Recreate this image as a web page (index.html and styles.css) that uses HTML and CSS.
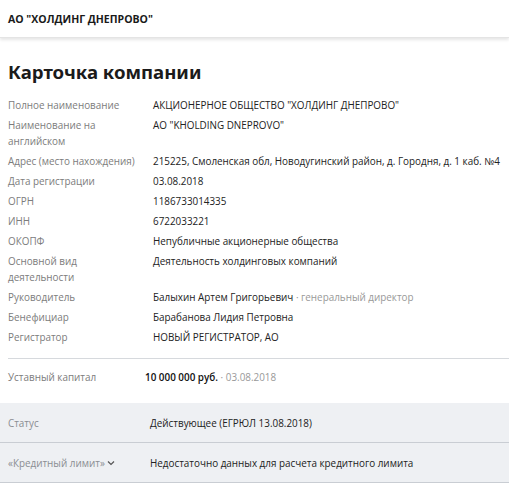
FILE: index.html
```html
<!DOCTYPE html>
<html lang="ru">
<head>
<meta charset="utf-8">
<link rel="stylesheet" href="styles.css">
</head>
<body>
<header class="topbar">АО "ХОЛДИНГ ДНЕПРОВО"</header>
<main class="card">
  <h1 class="title">Карточка компании</h1>
  <dl class="props">
    <div class="row"><dt>Полное наименование</dt><dd>АКЦИОНЕРНОЕ ОБЩЕСТВО "ХОЛДИНГ ДНЕПРОВО"</dd></div>
    <div class="row"><dt>Наименование на английском</dt><dd>АО "KHOLDING DNEPROVO"</dd></div>
    <div class="row"><dt>Адрес (место нахождения)</dt><dd>215225, Смоленская обл, Новодугинский район, д. Городня, д. 1 каб. №4</dd></div>
    <div class="row"><dt>Дата регистрации</dt><dd>03.08.2018</dd></div>
    <div class="row"><dt>ОГРН</dt><dd>1186733014335</dd></div>
    <div class="row"><dt>ИНН</dt><dd>6722033221</dd></div>
    <div class="row"><dt>ОКОПФ</dt><dd>Непубличные акционерные общества</dd></div>
    <div class="row"><dt>Основной вид деятельности</dt><dd>Деятельность холдинговых компаний</dd></div>
    <div class="row"><dt>Руководитель</dt><dd>Балыхин Артем Григорьевич <span class="muted">· генеральный директор</span></dd></div>
    <div class="row"><dt>Бенефициар</dt><dd>Барабанова Лидия Петровна</dd></div>
    <div class="row"><dt>Регистратор</dt><dd>НОВЫЙ РЕГИСТРАТОР, АО</dd></div>
  </dl>
  <div class="capital"><span class="lbl">Уставный капитал</span><span class="val"><b>10 000 000 руб.</b> <span class="muted">· 03.08.2018</span></span></div>
</main>
<section class="status">
  <div class="srow"><span class="lbl">Статус</span><span class="val">Действующее (ЕГРЮЛ 13.08.2018)</span></div>
  <div class="srow"><span class="lbl">«Кредитный лимит»<svg class="chev" width="8" height="6" viewBox="0 0 8 6"><path d="M1 1.5 L4 4.5 L7 1.5" fill="none" stroke="#555" stroke-width="1.2"/></svg></span><span class="val">Недостаточно данных для расчета кредитного лимита</span></div>
</section>
</body>
</html>
```
FILE: styles.css
```css
* { box-sizing: border-box; }
html, body { margin: 0; padding: 0; background: #fff; }
body { font-family: "Open Sans", "Noto Sans", sans-serif; color: #222; font-size: 9.9px; overflow: hidden; }
.topbar {
  height: 38px;
  padding: 0 8px;
  display: flex;
  align-items: center;
  font-family: "Open Sans", sans-serif;
  font-weight: 700;
  font-size: 10.5px;
  color: #1a1a1a;
  box-shadow: 0 2px 3px rgba(0,0,0,0.10);
  border-bottom: 1px solid #e4e4e4;
  position: relative;
}
.card { padding: 0 0 0 8px; }
.title {
  margin: 21px 0 10px;
  font-family: "Noto Sans", sans-serif;
  font-weight: 700;
  font-size: 18.6px;
  line-height: 26px;
  color: #1b1b1b;
}
.props { margin: 0; }
.row { display: flex; padding: 2px 0; line-height: 16px; }
.row dt { width: 145px; flex: none; color: #7c7c7c; padding-right: 11px; }
.row dd { margin: 0; color: #222; }
.muted { color: #999; }
.capital {
  display: flex;
  margin-top: 11px;
  border-top: 1px solid #d6d9dd;
  padding: 10px 0 18px;
  line-height: 16px;
}
.capital .lbl { width: 137px; flex: none; color: #7c7c7c; }
.capital b { font-weight: 600; color: #111; }
.status { background: #eef0f3; }
.srow {
  display: flex;
  align-items: center;
  height: 40px;
  padding-left: 8px;
  line-height: 16px;
  border-bottom: 1px solid #c9cdd3;
}
.srow .lbl { width: 142px; flex: none; color: #8a8d92; display: flex; align-items: center; }
.chev { margin-left: 2px; }
```
